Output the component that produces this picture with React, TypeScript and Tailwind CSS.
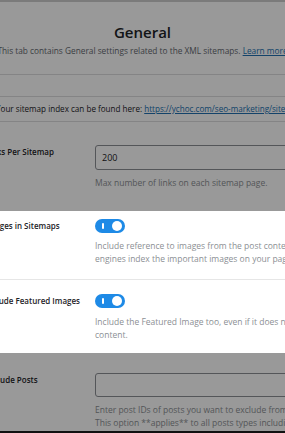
import React from 'react';

function Toggle() {
  return (
    <div className="relative h-[14px] w-[30px] rounded-full bg-[#1e8ae6]">
      <span className="absolute left-[7px] top-[4px] h-[6px] w-[2px] rounded-full bg-white" />
      <span className="absolute right-[3px] top-[2px] h-[10px] w-[10px] rounded-full bg-white" />
    </div>
  );
}

function Help({ children }: { children: React.ReactNode }) {
  return <p className="whitespace-nowrap text-[8.5px] leading-[13px] text-[#8c8f94]">{children}</p>;
}

function Label({ children }: { children: React.ReactNode }) {
  return <div className="text-[8px] font-semibold leading-[13px] text-[#1d2327]">{children}</div>;
}

export default function App() {
  return (
    <div className="relative h-[433px] w-[285px] overflow-hidden bg-white font-['Open_Sans',sans-serif] text-[#1d2327]">
      <div className="h-[2px] bg-[#cdcdcd]" />

      {/* header */}
      <div className="flex flex-col items-center pt-[19px]">
        <h1 className="text-[15px] font-semibold leading-[22px] text-[#1d2327]">General</h1>
        <div className="mt-[1px] flex w-[285px] justify-center">
          <p className="whitespace-nowrap text-[8.3px] leading-[13px] text-[#646970]">
            This tab contains General settings related to the XML sitemaps.{' '}
            <span className="text-[#2271b1] underline">Learn more</span>
          </p>
        </div>
      </div>

      <div className="mt-[17px] h-[23px] border-y border-[#dcdcde]" />

      <div className="-ml-[4px] whitespace-nowrap py-[5px] text-[8.1px] leading-[14px] text-[#1d2327]">
        Your sitemap index can be found here:{' '}
        <span className="text-[#2271b1] underline">https://ychoc.com/seo-marketing/sitemap_index.xml</span>
      </div>
      <div className="h-px bg-[#dcdcde]" />

      <div className="-ml-[15px] w-[700px]">
        {/* Links per sitemap */}
        <div className="grid grid-cols-[110px_1fr] pt-[23px] pb-[22px]">
          <Label>Links Per Sitemap</Label>
          <div>
            <div className="flex h-[25px] w-[400px] items-center rounded-[3px] border border-[#8c8f94] px-[6px] text-[9px]">
              200
            </div>
            <div className="mt-[6px]">
              <Help>Max number of links on each sitemap page.</Help>
            </div>
          </div>
        </div>

        {/* highlighted block */}
        <div className="relative z-10 bg-white shadow-[0_0_0_2000px_rgba(0,0,0,0.4)]">
          <div className="grid grid-cols-[110px_1fr] pt-[8px] pb-[14px]">
            <Label>Images in Sitemaps</Label>
            <div>
              <Toggle />
              <div className="mt-[6px]">
                <Help>
                  Include reference to images from the post content in sitemaps. This helps search
                  <br />
                  engines index the important images on your pages.
                </Help>
              </div>
            </div>
          </div>
          <div className="h-px bg-[#e6e6e6]" />
          <div className="grid grid-cols-[110px_1fr] pt-[14px] pb-[12px]">
            <Label>Include Featured Images</Label>
            <div>
              <Toggle />
              <div className="mt-[7px]">
                <Help>
                  Include the Featured Image too, even if it does not appear directly in the post
                  <br />
                  content.
                </Help>
              </div>
            </div>
          </div>
        </div>

        {/* Exclude posts */}
        <div className="grid grid-cols-[110px_1fr] pt-[20px]">
          <Label>Exclude Posts</Label>
          <div>
            <div className="h-[24px] w-[400px] rounded-[3px] border border-[#8c8f94]" />
            <div className="mt-[6px]">
              <Help>
                Enter post IDs of posts you want to exclude from the sitemap, separated by commas.
                <br />
                This option **applies** to all posts types including posts, pages and custom post types.
              </Help>
            </div>
          </div>
        </div>
      </div>

      <div className="absolute bottom-0 left-0 h-[2px] w-full bg-[#1d1d1d]" />
    </div>
  );
}
